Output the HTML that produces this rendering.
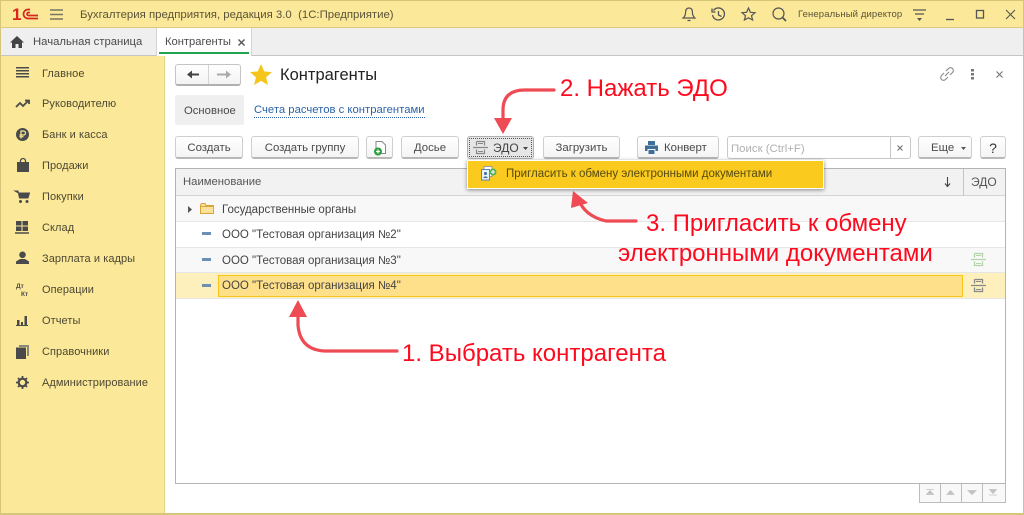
<!DOCTYPE html>
<html lang="ru"><head><meta charset="utf-8"><style>
*{box-sizing:border-box}
html,body{margin:0;padding:0}
body{width:1024px;height:515px;overflow:hidden;background:#fff;position:relative;font-family:"Liberation Sans",sans-serif;font-size:11px;color:#444}
.a{position:absolute}
.t{position:absolute;white-space:nowrap;line-height:14px}
.b{position:absolute;height:23px;top:136px;background:linear-gradient(#fff,#f4f4f4);border:1px solid #cfcfcf;border-bottom:2px solid #b8b8b8;border-radius:3px;text-align:center;line-height:22px;font-size:11.400px;color:#4a4a4a;white-space:nowrap}
.m{position:absolute;left:42px;font-size:11px;color:#4d4732;white-space:nowrap;line-height:14px;letter-spacing:.07px}
.r{position:absolute;white-space:nowrap;color:#fe0a1e;font-size:24px;line-height:28px}
svg{position:absolute;overflow:visible}
</style></head><body>
<div class="a" style="left:0;top:0;width:1024px;height:28px;background:#fbe999;border-top:1px solid #d8c875;border-bottom:1px solid #d8cc80"></div>
<div class="a" style="left:0;top:28px;width:1024px;height:28px;background:#efefef;border-bottom:1px solid #c4c4c4"></div>
<div class="a" style="left:0;top:56px;width:165px;height:459px;background:#fbe999;border-right:1px solid #e2d48a"></div>
<div class="a" style="left:0;top:0;width:1024px;height:515px;border:1px solid #d5c67a;border-bottom:2px solid #d5c67a"></div>

<div class="t" style="left:12px;top:6px;font:bold 17px/17px 'Liberation Sans',sans-serif;color:#d8261c">1</div>
<svg style="left:21px;top:8px" width="18" height="12"><path d="M9 1.500H7A4.500 4.500 0 0 0 7 10.500H17M9 4.500H7.500A1.500 1.500 0 0 0 7.500 7.500H17" fill="none" stroke="#d8261c" stroke-width="1.700"/></svg>
<svg style="left:50px;top:9px" width="13" height="11"><path d="M0 1H13M0 5.500H13M0 10H13" stroke="#77755f" stroke-width="1.500"/></svg>
<div class="t" style="left:80px;top:8px;font-size:11.400px;color:#5a5338">Бухгалтерия предприятия, редакция 3.0&nbsp; (1С:Предприятие)</div>

<svg style="left:682px;top:7px" width="14" height="15"><path d="M7 1C4 1 3.500 3.500 3.500 6C3.500 9 2 10 1 11H13C12 10 10.500 9 10.500 6C10.500 3.500 10 1 7 1ZM5.500 13.500H8.500" fill="none" stroke="#555" stroke-width="1.200"/></svg>
<svg style="left:711px;top:7px" width="15" height="15"><path d="M2.500 3.500A6 6 0 1 1 1.500 8M1 1.500V5H4.500M7.500 4V8L10.500 9.500" fill="none" stroke="#555" stroke-width="1.300"/></svg>
<svg style="left:741px;top:7px" width="15" height="14"><path d="M7.500 1L9.400 5.300L14 5.700L10.500 8.700L11.600 13L7.500 10.800L3.400 13L4.500 8.700L1 5.700L5.600 5.300Z" fill="none" stroke="#555" stroke-width="1.200"/></svg>
<svg style="left:772px;top:7px" width="15" height="15"><circle cx="6.500" cy="6.500" r="5.500" fill="none" stroke="#555" stroke-width="1.200"/><path d="M10.500 10.500L14 14" stroke="#555" stroke-width="1.800"/></svg>
<div class="t" style="left:798px;top:8px;font-size:9.500px;color:#5a5338;letter-spacing:.12px">Генеральный директор</div>
<svg style="left:913px;top:9px" width="14" height="13"><path d="M0 1H13M2 5H11" stroke="#555" stroke-width="1.200"/><path d="M4 9H9L6.500 12Z" fill="#555"/></svg>
<svg style="left:946px;top:10px" width="70" height="12"><path d="M0 9.500H8" stroke="#555" stroke-width="1.300"/><rect x="30.500" y=".5" width="7" height="7.500" fill="none" stroke="#555" stroke-width="1.300"/><path d="M60 0L69 9M69 0L60 9" stroke="#555" stroke-width="1.100"/></svg>

<svg style="left:10px;top:36px" width="14" height="12"><path d="M7 0L14 6.500H12V12H8.500V8H5.500V12H2V6.500H0Z" fill="#444"/></svg>
<div class="t" style="left:33px;top:35px;font-size:11.300px;color:#4a4a4a">Начальная страница</div>
<div class="a" style="left:156px;top:28px;width:96px;height:28px;background:#fff;border-left:1px solid #d4d4d4;border-right:1px solid #d4d4d4"></div>
<div class="a" style="left:159px;top:52px;width:90px;height:2px;background:#22a350"></div>
<div class="t" style="left:165px;top:35px;font-size:11.200px;color:#4a4a4a">Контрагенты</div>
<svg style="left:238px;top:39px" width="7" height="7"><path d="M.5 .5L6.500 6.500M6.500 .5L.5 6.500" stroke="#555" stroke-width="1.400"/></svg>

<svg style="left:16px;top:67px" width="13" height="12"><path d="M0 .8H13M0 3.800H13M0 6.800H13M0 9.800H13" stroke="#4a4a4a" stroke-width="1.500"/></svg>
<div class="m" style="top:66px;margin-top:1px">Главное</div>
<svg style="left:15px;top:99px" width="15" height="10"><path d="M1 8L5 4L8 7L13 2M10 1.500H14V5" fill="none" stroke="#4a4a4a" stroke-width="1.800"/></svg>
<div class="m" style="top:97px">Руководителю</div>
<svg style="left:16px;top:128px" width="13" height="13"><circle cx="6.500" cy="6.500" r="6.500" fill="#4a4a4a"/><path d="M5 10.500V3H7.500A2 2 0 0 1 7.500 7H3.500M3.500 8.700H7.500" fill="none" stroke="#fbe999" stroke-width="1.200"/></svg>
<div class="m" style="top:128px">Банк и касса</div>
<svg style="left:17px;top:158px" width="12" height="14"><path d="M0 4H12V14H0Z" fill="#4a4a4a"/><path d="M3.500 6V3A2.500 2.500 0 0 1 8.500 3V6" fill="none" stroke="#4a4a4a" stroke-width="1.300"/></svg>
<div class="m" style="top:159px">Продажи</div>
<svg style="left:15px;top:190px" width="15" height="13"><path d="M0 1H3L4.500 8H13L14.500 3H3.500Z" fill="#4a4a4a" stroke="#4a4a4a"/><circle cx="5.500" cy="11.500" r="1.500" fill="#4a4a4a"/><circle cx="12" cy="11.500" r="1.500" fill="#4a4a4a"/></svg>
<div class="m" style="top:190px">Покупки</div>
<svg style="left:15px;top:221px" width="14" height="13"><path d="M1 0H6.500V4.500H1ZM7.500 0H13V4.500H7.500ZM1 5.500H6.500V10H1ZM7.500 5.500H13V10H7.500Z" fill="#4a4a4a"/><path d="M0 12H14" stroke="#4a4a4a" stroke-width="1.500"/></svg>
<div class="m" style="top:221px">Склад</div>
<svg style="left:16px;top:251px" width="13" height="14"><circle cx="6.500" cy="3.800" r="3.300" fill="#4a4a4a"/><path d="M0 13V10.500L4 8H9L13 10.500V13Z" fill="#4a4a4a"/></svg>
<div class="m" style="top:252px">Зарплата и кадры</div>
<div class="t" style="left:16px;top:283px;font:bold 6.500px/7px 'Liberation Sans',sans-serif;color:#4a4a4a">Дт</div>
<div class="t" style="left:21px;top:291px;font:bold 6.500px/7px 'Liberation Sans',sans-serif;color:#4a4a4a">Кт</div>
<div class="m" style="top:283px">Операции</div>
<svg style="left:16px;top:316px" width="12" height="10"><path d="M0 9.500H12" stroke="#4a4a4a"/><path d="M1 4H3.500V9H1ZM5 6H7V9H5ZM8.500 0H11V9H8.500Z" fill="#4a4a4a"/></svg>
<div class="m" style="top:314px">Отчеты</div>
<svg style="left:16px;top:345px" width="13" height="14"><path d="M3 0H13V11H11V2H3Z" fill="#8a8a7a"/><path d="M0 2.500H10V14H0Z" fill="#4a4a4a"/></svg>
<div class="m" style="top:345px">Справочники</div>
<svg style="left:16px;top:376px" width="13" height="13"><circle cx="6.500" cy="6.500" r="3.800" fill="none" stroke="#4a4a4a" stroke-width="2.200"/><path d="M6.500 0V13M0 6.500H13M2 2L11 11M11 2L2 11" stroke="#4a4a4a" stroke-width="1.800" stroke-dasharray="2.500 8 2.500 0"/></svg>
<div class="m" style="top:376px">Администрирование</div>

<div class="a" style="left:175px;top:64px;width:66px;height:22px;background:linear-gradient(#fff,#f3f3f3);border:1px solid #c4c4c4;border-bottom:2px solid #b0b0b0;border-radius:3px"></div>
<div class="a" style="left:208px;top:65px;width:1px;height:19px;background:#d4d4d4"></div>
<svg style="left:187px;top:70px" width="50" height="9"><path d="M0 4.500L5 .5V3.500H12V5.500H5V8.500Z" fill="#444"/><path d="M44 4.500L39 .5V3.500H30V5.500H39V8.500Z" fill="#aaa"/></svg>
<svg style="left:250px;top:64px" width="22" height="21"><path d="M11 0L14.200 7.400L22 8.100L16.100 13.300L17.900 21L11 16.900L4.100 21L5.900 13.300L0 8.100L7.800 7.400Z" fill="#f6c51c"/></svg>
<div class="t" style="left:280px;top:66px;font-size:16.500px;line-height:18px;color:#222">Контрагенты</div>

<svg style="left:940px;top:67px" width="14" height="14"><path d="M6 4L8.500 1.500A2.400 2.400 0 0 1 12.500 5.500L10 8M8 10L5.500 12.500A2.400 2.400 0 0 1 1.500 8.500L4 6M5 9L9 5" fill="none" stroke="#8a8a8a" stroke-width="1.100"/></svg>
<svg style="left:971px;top:69px" width="3" height="11"><path d="M0 0H3V2.500H0ZM0 4H3V6.500H0ZM0 8H3V10.500H0Z" fill="#777"/></svg>
<svg style="left:996px;top:71px" width="7" height="7"><path d="M.5 .5L6.500 6.500M6.500 .5L.5 6.500" stroke="#777" stroke-width="1.200"/></svg>

<div class="a" style="left:175px;top:95px;width:69px;height:30px;background:#efefef;border-radius:2px"></div>
<div class="t" style="left:184px;top:104px;font-size:11.300px;color:#4a4a4a">Основное</div>
<div class="t" style="left:254px;top:104px;font-size:11.300px;color:#2b63a8;border-bottom:1px dotted #2b63a8;line-height:13px">Счета расчетов с контрагентами</div>

<div class="b" style="left:175px;width:68px">Создать</div>
<div class="b" style="left:251px;width:108px">Создать группу</div>
<div class="b" style="left:366px;width:27px"></div>
<svg style="left:373px;top:141px" width="14" height="15"><path d="M3 .5H9L12.500 4V12.500H3Z" fill="#fff" stroke="#888"/><circle cx="5" cy="10.500" r="4" fill="#2a9d3e"/><path d="M3 10.500H7M5 8.500V12.500" stroke="#fff" stroke-width="1.200"/></svg>
<div class="b" style="left:401px;width:58px">Досье</div>
<div class="a" style="left:467px;top:136px;width:67px;height:23px;background:#e6e6e6;border:1px solid #b0b0b0;border-radius:3px"></div>
<div class="a" style="left:469px;top:138px;width:63px;height:19px;border:1px dotted #555"></div>
<svg style="left:473px;top:141px" width="15" height="14"><path d="M3.500 .5H11.500V4.500M3.500 .5V4.500M3.500 8.500V12.500H11.500V8.500M0 6.500H15" fill="none" stroke="#888" stroke-width="1.200"/><path d="M5 2.500H10M5 10.500H10" stroke="#888"/></svg>
<div class="t" style="left:493px;top:141px;font-size:12px;color:#444">ЭДО</div>
<svg style="left:523px;top:147px" width="5" height="3"><path d="M0 0H5L2.500 3Z" fill="#444"/></svg>
<div class="b" style="left:543px;width:77px">Загрузить</div>
<div class="b" style="left:637px;width:82px;text-align:left;padding-left:26px">Конверт</div>
<svg style="left:645px;top:141px" width="13" height="13"><path d="M3 0H10V4H3ZM0 4.500H13V10H10.500V8H2.500V10H0ZM3.500 9H9.500V13H3.500Z" fill="#3f6f98"/></svg>
<div class="a" style="left:727px;top:136px;width:184px;height:23px;background:#fff;border:1px solid #c8c8c8;border-radius:3px"></div>
<div class="a" style="left:890px;top:137px;width:1px;height:21px;background:#c8c8c8"></div>
<div class="t" style="left:731px;top:142px;font-size:11.400px;color:#b0b0b0">Поиск (Ctrl+F)</div>
<svg style="left:897px;top:145px" width="6" height="6"><path d="M.5 .5L5.500 5.500M5.500 .5L.5 5.500" stroke="#777" stroke-width="1.200"/></svg>
<div class="b" style="left:918px;width:54px;text-align:left;padding-left:12px">Еще</div>
<svg style="left:961px;top:147px" width="5" height="3"><path d="M0 0H5L2.500 3Z" fill="#555"/></svg>
<div class="b" style="left:980px;width:26px;font-size:14px;color:#333">?</div>

<div class="a" style="left:175px;top:168px;width:831px;height:316px;border:1px solid #b4b4b4;background:#fff"></div>
<div class="a" style="left:176px;top:169px;width:829px;height:27px;background:#f2f2f2;border-bottom:1px solid #d4d4d4"></div>
<div class="a" style="left:963px;top:169px;width:1px;height:27px;background:#c4c4c4"></div>
<div class="t" style="left:183px;top:175px;font-size:11.300px;color:#555">Наименование</div>
<svg style="left:944px;top:177px" width="7" height="10"><path d="M3.500 0V9M1 6.500L3.500 9.500L6 6.500" fill="none" stroke="#444" stroke-width="1.100"/></svg>
<div class="t" style="left:971px;top:175px;font-size:12px;color:#555">ЭДО</div>

<div class="a" style="left:176px;top:196px;width:829px;height:26px;background:#f8f8f8;border-bottom:1px solid #e6e6e6"></div>
<div class="a" style="left:176px;top:222px;width:829px;height:26px;background:#fff;border-bottom:1px solid #e6e6e6"></div>
<div class="a" style="left:176px;top:248px;width:829px;height:25px;background:#f8f8f8;border-bottom:1px solid #e6e6e6"></div>
<div class="a" style="left:176px;top:273px;width:829px;height:25px;background:#fdf0bd"></div>
<div class="a" style="left:218px;top:275px;width:745px;height:22px;background:#fee08a;border:1px solid #f8c51c"></div>
<div class="a" style="left:176px;top:298px;width:829px;height:1px;background:#e6e6e6"></div>

<svg style="left:188px;top:206px" width="4" height="7"><path d="M0 0L4 3.500L0 7Z" fill="#555"/></svg>
<svg style="left:200px;top:203px" width="14" height="11"><path d="M.5 2V10.500H13.500V2.500H6L5 .5H1.500Z" fill="#fbe29a" stroke="#d9a53a"/><path d="M.5 3.500H13.500" stroke="#d9a53a"/></svg>
<div class="t" style="left:222px;top:203px;font-size:11.500px;color:#444">Государственные органы</div>
<div class="a" style="left:202px;top:232px;width:9px;height:3px;background:#6a90b4"></div>
<div class="t" style="left:222px;top:228px;font-size:11.500px;color:#444">ООО "Тестовая организация №2"</div>
<div class="a" style="left:202px;top:258px;width:9px;height:3px;background:#6a90b4"></div>
<div class="t" style="left:222px;top:254px;font-size:11.500px;color:#444">ООО "Тестовая организация №3"</div>
<div class="a" style="left:202px;top:284px;width:9px;height:3px;background:#6a90b4"></div>
<div class="t" style="left:222px;top:279px;font-size:11.500px;color:#444">ООО "Тестовая организация №4"</div>
<svg style="left:971px;top:253px" width="15" height="14"><path d="M3.500 .5H11.500V4.500M3.500 .5V4.500M3.500 8.500V12.500H11.500V8.500M0 6.500H15" fill="none" stroke="#b2d4a6" stroke-width="1.300"/><path d="M5 2.500H10M5 10.500H10" stroke="#b2d4a6"/></svg>
<svg style="left:971px;top:279px" width="15" height="14"><path d="M3.500 .5H11.500V4.500M3.500 .5V4.500M3.500 8.500V12.500H11.500V8.500M0 6.500H15" fill="none" stroke="#888" stroke-width="1.300"/><path d="M5 2.500H10M5 10.500H10" stroke="#888"/></svg>

<div class="a" style="left:467px;top:160px;width:357px;height:29px;background:#fbca1e;border:1px solid #fff;box-shadow:0 1px 4px rgba(0,0,0,.45)"></div>
<svg style="left:481px;top:166px" width="16" height="15"><rect x="3" y=".5" width="8" height="10" fill="#fff" stroke="#999"/><rect x=".5" y="3.500" width="8" height="10.500" fill="#e8f0f8" stroke="#5a86ad"/><circle cx="4.500" cy="7.500" r="1.500" fill="#3f6f98"/><path d="M2 12Q4.500 8.500 7 12Z" fill="#3f6f98"/><circle cx="12" cy="6" r="3.500" fill="#55b05a"/><path d="M10 6H14M12 4V8" stroke="#fff"/></svg>
<div class="t" style="left:506px;top:167px;font-size:11.500px;color:#554a10">Пригласить к обмену электронными документами</div>

<svg style="left:919px;top:484px" width="87" height="19"><path d="M.5 0V18.500H86.500V0M21.500 0V18.500M42.500 0V18.500M63.500 0V18.500" fill="#f8f8f8" stroke="#bcbcbc"/><path d="M7 5.500H15M7.500 10.500L11 6.500L14.500 10.500ZM28 10.500L31.500 6.500L35 10.500ZM49 6.500H57L53 10.500ZM70 11H78M70.500 5.500H77.500L74 9.500Z" fill="#c2c2c2" stroke="#c2c2c2" stroke-width=".8"/></svg>

<svg style="left:0;top:0" width="1024" height="515">
<g fill="none" stroke="#ee4b55" stroke-width="3.200" stroke-linecap="round">
<path d="M554 90H525Q503 90 503 110V122"/>
<path d="M578 198Q584 216 606 221H636"/>
<path d="M298 310V325Q300 350 325 351H397"/>
</g>
<g fill="#ee4b55">
<path d="M494 118H512L503 134Z"/>
<path d="M573 191L588 203L571 208Z"/>
<path d="M298 300L307 317H289Z"/>
</g></svg>
<div class="r" style="left:560px;top:75px">2. Нажать ЭДО</div>
<div class="r" style="left:646px;top:210px">3. Пригласить к обмену</div>
<div class="r" style="left:618px;top:240px">электронными документами</div>
<div class="r" style="left:402px;top:340px">1. Выбрать контрагента</div>
</body></html>
